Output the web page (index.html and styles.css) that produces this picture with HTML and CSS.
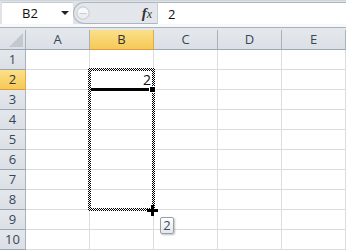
FILE: index.html
```html
<!DOCTYPE html>
<html>
<head>
<meta charset="utf-8">
<link rel="stylesheet" href="styles.css">
</head>
<body>
<div class="app">
  <div class="fbar">
    <div class="namebox"><span class="ref">B2</span><span class="caret"></span></div>
    <div class="mid">
      <svg class="grip" width="14" height="14" viewBox="0 0 14 14">
        <circle cx="7" cy="7" r="6.2" fill="#eceef1" stroke="#c4c9cf" stroke-width="1"/>
        <path d="M2 7 A5 5 0 0 1 12 7 Z" fill="#f7f8f9"/>
        <line x1="3.5" y1="7.5" x2="10.5" y2="7.5" stroke="#c9cdd3" stroke-width="1"/>
      </svg>
      <span class="fx"><i class="f">f</i><i class="x">x</i></span>
    </div>
    <div class="formula">2</div>
  </div>
  <div class="sep"></div>
  <div class="grid">
    <div class="corner"><svg width="14" height="14" viewBox="0 0 14 14"><path d="M14 0 L14 14 L0 14 Z" fill="#c3c8ce"/></svg></div>
    <div class="ch">A</div><div class="ch sel">B</div><div class="ch">C</div><div class="ch">D</div><div class="ch">E</div>

    <div class="rh">1</div><div class="c"></div><div class="c"></div><div class="c"></div><div class="c"></div><div class="c"></div>
    <div class="rh sel">2</div><div class="c"></div><div class="c val">2</div><div class="c"></div><div class="c"></div><div class="c"></div>
    <div class="rh">3</div><div class="c"></div><div class="c"></div><div class="c"></div><div class="c"></div><div class="c"></div>
    <div class="rh">4</div><div class="c"></div><div class="c"></div><div class="c"></div><div class="c"></div><div class="c"></div>
    <div class="rh">5</div><div class="c"></div><div class="c"></div><div class="c"></div><div class="c"></div><div class="c"></div>
    <div class="rh">6</div><div class="c"></div><div class="c"></div><div class="c"></div><div class="c"></div><div class="c"></div>
    <div class="rh">7</div><div class="c"></div><div class="c"></div><div class="c"></div><div class="c"></div><div class="c"></div>
    <div class="rh">8</div><div class="c"></div><div class="c"></div><div class="c"></div><div class="c"></div><div class="c"></div>
    <div class="rh">9</div><div class="c"></div><div class="c"></div><div class="c"></div><div class="c"></div><div class="c"></div>
    <div class="rh">10</div><div class="c"></div><div class="c"></div><div class="c"></div><div class="c"></div><div class="c"></div>
  </div>

  <div class="ants"></div>
  <div class="thick"></div>
  <div class="handle"></div>
  <div class="plus"></div>
  <div class="tip">2</div>
</div>
</body>
</html>
```
FILE: styles.css
```css
html, body {
  margin: 0;
  padding: 0;
  background: #ffffff;
}
.app {
  position: relative;
  width: 346px;
  height: 250px;
  overflow: hidden;
  font-family: "Open Sans", "Noto Sans", sans-serif;
}
.fbar {
  display: flex;
  height: 24px;
  box-sizing: border-box;
  padding-top: 2px;
  background: linear-gradient(#cfd5dc 0 1px, #dfe3e8 1px);
}
.namebox {
  width: 71px;
  margin-left: 2px;
  background: #ffffff;
  border-top: 1px solid #c5cbd2;
  box-sizing: border-box;
  display: flex;
  align-items: center;
  position: relative;
}
.ref {
  font-size: 13px;
  color: #111;
  margin-left: 20px;
  line-height: 1;
}
.caret {
  position: absolute;
  left: 59px;
  top: 8px;
  width: 0;
  height: 0;
  border-left: 4px solid transparent;
  border-right: 4px solid transparent;
  border-top: 4px solid #222;
}
.mid {
  width: 84px;
  box-sizing: border-box;
  background: #e3e6ea;
  border: 1px solid #aeb5bd;
  border-right: none;
  border-radius: 11px 0 0 11px;
  display: flex;
  align-items: center;
  position: relative;
}
.grip {
  margin-left: 2px;
}
.fx {
  margin-left: auto;
  margin-right: 5px;
  font-family: "Liberation Serif", serif;
  font-size: 15px;
  color: #333;
  line-height: 1;
  display: flex;
  align-items: baseline;
}
.fx .f {
  font-weight: bold;
  font-style: italic;
}
.fx .x {
  font-style: italic;
  font-size: 12px;
  margin-left: 0px;
}
.formula {
  flex: 1;
  background: #ffffff;
  border-top: 1px solid #aeb5bd;
  border-left: 1px solid #c8cdd3;
  box-sizing: border-box;
  font-size: 13px;
  color: #111;
  padding-left: 10px;
  display: flex;
  align-items: center;
}
.sep {
  height: 6px;
  background: linear-gradient(#f7f8fa 0 3px, #a9b0b9 3px 4px, #e3e7ec 4px);
}
.grid {
  display: grid;
  grid-template-columns: 26px repeat(5, 64px);
  grid-auto-rows: 20px;
}
.grid > div {
  box-sizing: border-box;
  border-right: 1px solid #dadcdd;
  border-bottom: 1px solid #dadcdd;
}
.grid > .corner,
.grid > .ch,
.grid > .rh {
  background: linear-gradient(#e4e8ed, #dbe0e6);
  border-right: 1px solid #a9b1bb;
  border-bottom: 1px solid #9ea7b1;
  color: #3a4656;
  font-size: 13px;
  display: flex;
  align-items: center;
  justify-content: center;
  line-height: 1;
}
.grid > .corner {
  align-items: flex-end;
  justify-content: flex-end;
  padding: 0 2px 2px 0;
}
.corner svg {
  display: block;
}
.grid > .sel {
  background: linear-gradient(#fbe08a, #f6c957);
  border-right-color: #e3aa48;
  border-bottom-color: #e09c3b;
  color: #333;
}
.grid > .val {
  font-size: 14px;
  color: #111;
  display: flex;
  align-items: center;
  justify-content: flex-end;
  padding-right: 2px;
  line-height: 1;
}
.ants {
  position: absolute;
  left: 88px;
  top: 68px;
  width: 67px;
  height: 143px;
  box-sizing: border-box;
  padding: 3px;
  background: repeating-conic-gradient(#000 0 25%, #fff 0 50%) 0 0 / 2px 2px;
  -webkit-mask: linear-gradient(#000 0 0) content-box, linear-gradient(#000 0 0);
  -webkit-mask-composite: xor;
  mask: linear-gradient(#000 0 0) content-box exclude, linear-gradient(#000 0 0);
}
.thick {
  position: absolute;
  left: 91px;
  top: 88px;
  width: 59px;
  height: 3px;
  background: #000;
}
.handle {
  position: absolute;
  left: 149px;
  top: 86px;
  width: 5px;
  height: 5px;
  background: #000;
  border: 1px solid #fff;
}
.plus {
  position: absolute;
  left: 147px;
  top: 205px;
  width: 11px;
  height: 11px;
  background:
    linear-gradient(#000 0 0) 4px 0 / 3px 11px no-repeat,
    linear-gradient(#000 0 0) 0 4px / 11px 3px no-repeat;
}
.tip {
  position: absolute;
  left: 160px;
  top: 217px;
  width: 14px;
  height: 17px;
  box-sizing: border-box;
  border: 1px solid #9a9fa6;
  border-radius: 2px;
  background: linear-gradient(#ffffff, #e4e7eb);
  box-shadow: 1px 1px 2px rgba(0, 0, 0, 0.25);
  font-size: 13px;
  color: #3c4a5c;
  display: flex;
  align-items: center;
  justify-content: center;
  line-height: 1;
}
```
